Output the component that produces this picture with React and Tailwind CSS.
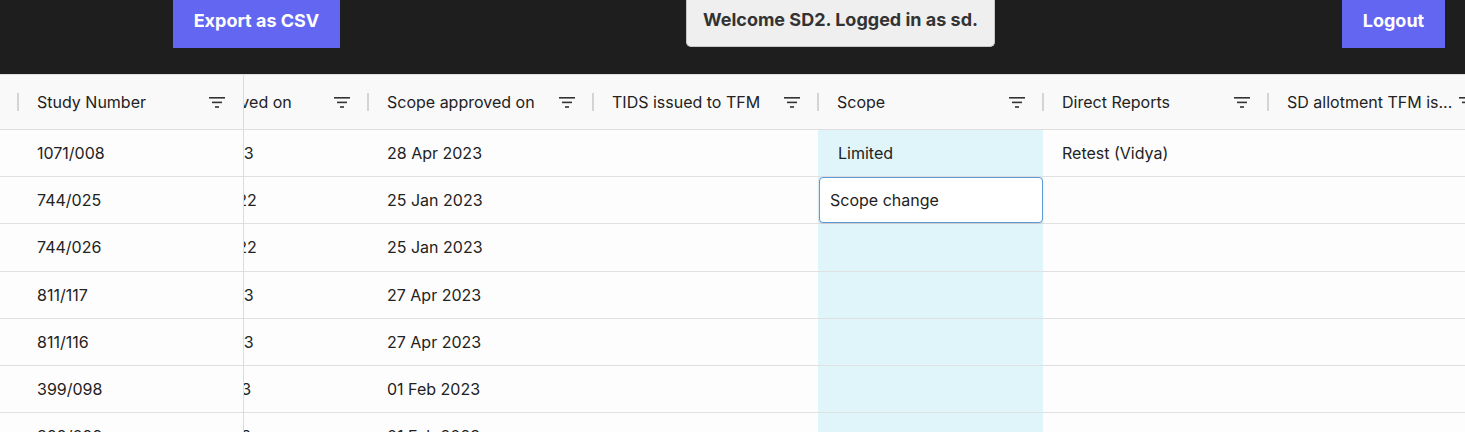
import React from "react";

const columns = [
  { key: "received", label: "TIDS received on" },
  { key: "approved", label: "Scope approved on" },
  { key: "tids", label: "TIDS issued to TFM" },
  { key: "scope", label: "Scope" },
  { key: "direct", label: "Direct Reports" },
  { key: "allot", label: "SD allotment TFM is..." },
];

const rows = [
  { study: "1071/008", received: "21 Apr 2023", approved: "28 Apr 2023", scope: "Limited", direct: "Retest (Vidya)" },
  { study: "744/025", received: "16 Dec 2022", approved: "25 Jan 2023", scope: "Scope change", editing: true },
  { study: "744/026", received: "16 Dec 2022", approved: "25 Jan 2023" },
  { study: "811/117", received: "21 Apr 2023", approved: "27 Apr 2023" },
  { study: "811/116", received: "21 Apr 2023", approved: "27 Apr 2023" },
  { study: "399/098", received: "11 Jan 2023", approved: "01 Feb 2023" },
  { study: "399/099", received: "11 Jan 2023", approved: "01 Feb 2023" },
];

function FilterIcon() {
  return (
    <svg width="16" height="11" viewBox="0 0 16 11" className="shrink-0">
      <rect x="0" y="0" width="16" height="1.6" fill="#333" />
      <rect x="3" y="4.6" width="10" height="1.6" fill="#333" />
      <rect x="6" y="9.2" width="4" height="1.6" fill="#333" />
    </svg>
  );
}

function HeaderCell({ label }) {
  return (
    <div className="relative flex items-center shrink-0 h-full w-[225px] pl-[19px] pr-[18px]">
      <span className="absolute left-[-1px] top-[18px] h-[18px] w-[2px] bg-[#d4d4d4]" />
      <span className="flex-1 min-w-0 whitespace-nowrap overflow-hidden pb-[1px]">{label}</span>
      <FilterIcon />
    </div>
  );
}

export default function App() {
  return (
    <div className="w-[1465px] h-[432px] overflow-hidden bg-[#fdfdfd] text-[16px] text-[#222]" style={{ fontFamily: "Inter, 'Noto Sans', sans-serif" }}>
      <div className="h-[74px] bg-[#1e1e1e] flex items-start">
        <button className="ml-[173px] w-[167px] h-[48px] pb-[7px] bg-[#6366f1] text-white font-bold text-[18px]">Export as CSV</button>
        <div className="ml-[346px] w-[309px] h-[47px] pb-[7px] bg-[#efefef] border border-t-0 border-[#c8c8c8] rounded-b-[5px] flex items-center justify-center font-bold text-[18px] text-[#333]">
          Welcome SD2. Logged in as sd.
        </div>
        <button className="ml-auto mr-[20px] w-[103px] h-[48px] pb-[7px] bg-[#6366f1] text-white font-bold text-[18px]">Logout</button>
      </div>

      <div className="flex border-t border-[#e0e0e0]">
        <div className="w-[244px] shrink-0 border-r border-[#dcdcdc]">
          <div className="h-[55px] bg-[#f9f9f9] border-b border-[#dedede] flex">
            <div className="w-[18px] shrink-0" />
            <HeaderCell label="Study Number" />
          </div>
          {rows.map((r) => (
            <div key={r.study} className="h-[47.2px] border-b border-[#e0e0e0] flex items-center pl-[37px]">
              {r.study}
            </div>
          ))}
        </div>

        <div className="flex-1 overflow-hidden">
          <div className="ml-[-101px] w-[1400px]">
            <div className="h-[55px] bg-[#f9f9f9] border-b border-[#dedede] flex">
              {columns.map((c) => (
                <HeaderCell key={c.key} label={c.label} />
              ))}
            </div>
            {rows.map((r) => (
              <div key={r.study} className="h-[47.2px] border-b border-[#e0e0e0] flex">
                {columns.map((c) => {
                  const isScope = c.key === "scope";
                  if (isScope && r.editing) {
                    return (
                      <div key={c.key} className="w-[225px] shrink-0 pl-[1px] bg-[#dff5fa]">
                        <div className="h-full bg-white border border-[#5b9bd8] rounded-[4px] shadow-sm flex items-center pl-[10px]">
                          {r.scope}
                        </div>
                      </div>
                    );
                  }
                  return (
                    <div
                      key={c.key}
                      className={`w-[225px] shrink-0 flex items-center pl-[19px] ${isScope ? "bg-[#dff5fa] border-l border-[#dff5fa]" : ""}`}
                    >
                      {r[c.key] || ""}
                    </div>
                  );
                })}
              </div>
            ))}
          </div>
        </div>
      </div>
    </div>
  );
}
